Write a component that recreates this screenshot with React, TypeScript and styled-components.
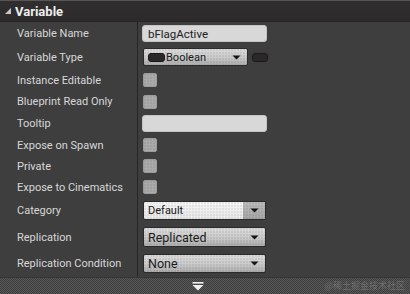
import React from "react";
import styled, { createGlobalStyle } from "styled-components";

const Global = createGlobalStyle`
  html, body { margin: 0; padding: 0; background: #3e3e3e; }
  body { font-family: Roboto, "Noto Sans", sans-serif; }
`;

const Panel = styled.div`
  width: 410px;
  height: 294px;
  display: flex;
  flex-direction: column;
  background: #3e3e3e;
  overflow: hidden;
`;

const Header = styled.div`
  height: 22px;
  box-sizing: border-box;
  border-top: 1px solid #565656;
  background: linear-gradient(#302e2e, #2c2a2a);
  border-bottom: 1px solid #262626;
  display: flex;
  align-items: center;
  padding-left: 5px;
  gap: 4px;
`;

const Title = styled.span`
  font-family: Roboto, sans-serif;
  font-weight: 700;
  font-size: 13px;
  color: #eeeeee;
  line-height: 1;
`;

const Body = styled.div`
  display: flex;
  flex-direction: column;
  flex: 1;
`;

const Row = styled.div<{ $h: number }>`
  display: grid;
  grid-template-columns: 138px 1fr;
  height: ${(p) => p.$h}px;
`;

const Label = styled.div`
  box-sizing: border-box;
  border-right: 1px solid #262626;
  padding-left: 17px;
  display: flex;
  align-items: center;
  font-size: 11px;
  color: #d8d8d8;
  white-space: nowrap;
`;

const Value = styled.div`
  display: flex;
  align-items: center;
  padding-left: 4px;
  gap: 4px;
`;

const TextBox = styled.div`
  box-sizing: border-box;
  width: 125px;
  height: 17px;
  border-radius: 3px;
  background: #d8d8d8;
  border: 1px solid #c4c4c4;
  display: flex;
  align-items: center;
  padding-left: 5px;
  font-size: 11.5px;
  color: #202020;
`;

const dots = `
  radial-gradient(circle at 1px 1px, rgba(0,0,0,0.1) 0.6px, transparent 0.9px)
`;

const Check = styled.div`
  box-sizing: border-box;
  width: 14px;
  height: 14px;
  margin-left: 1px;
  border-radius: 2px;
  background-color: #ababab;
  background-image: ${dots};
  background-size: 3px 3px;
  border: 1px solid #9a9a9a;
`;

const Combo = styled.div<{ $w: number; $h: number; $light?: boolean }>`
  box-sizing: border-box;
  position: relative;
  width: ${(p) => p.$w}px;
  height: ${(p) => p.$h}px;
  margin-left: 1px;
  border: 1px solid #2a2a2a;
  border-radius: 2px;
  display: flex;
  align-items: center;
  background-image: ${dots},
    ${(p) =>
      p.$light
        ? "linear-gradient(#f6f6f6, #e8e8e8)"
        : "linear-gradient(#dcdcdc, #cacaca 55%, #acacac)"};
  background-size: 3px 3px, 100% 100%;
  color: #1b1b1b;
`;

const ComboText = styled.span<{ $size: number }>`
  flex: 1;
  padding-left: 4px;
  font-size: ${(p) => p.$size}px;
  display: flex;
  align-items: center;
  gap: 1px;
`;

const ArrowZone = styled.div<{ $shade?: boolean }>`
  width: 22px;
  align-self: stretch;
  display: flex;
  align-items: center;
  justify-content: center;
  background-image: ${(p) =>
    p.$shade ? `${dots}, linear-gradient(#bcbcbc, #a6a6a6)` : "none"};
  background-size: 3px 3px, 100% 100%;
`;

const Pill = styled.span<{ $w: number }>`
  display: inline-block;
  width: ${(p) => p.$w}px;
  height: 7px;
  border-radius: 3px;
  background: #2a2828;
  border: 1px solid #1a1a1a;
`;

const Footer = styled.div`
  height: 17px;
  box-sizing: border-box;
  border-top: 1px solid #363636;
  background-color: #4a4a4a;
  background-image: repeating-conic-gradient(#585858 0% 25%, #3e3e3e 0% 50%);
  background-size: 2px 2px;
  display: flex;
  align-items: center;
  position: relative;
`;

const FooterArrow = styled.div`
  margin-left: 192px;
  display: flex;
`;

const Watermark = styled.span`
  position: absolute;
  right: 5px;
  top: 3px;
  font-family: "Noto Sans CJK SC", sans-serif;
  font-size: 9px;
  color: rgba(140, 140, 140, 0.55);
  line-height: 1;
`;

const DownArrow = () => (
  <svg width="9" height="5" viewBox="0 0 9 5">
    <path d="M0.5 0.5 L8.5 0.5 L4.5 4.5 Z" fill="#151515" />
  </svg>
);

const rows: { label: string; h: number; kind: string }[] = [
  { label: "Variable Name", h: 23, kind: "name" },
  { label: "Variable Type", h: 24, kind: "type" },
  { label: "Instance Editable", h: 22, kind: "check" },
  { label: "Blueprint Read Only", h: 21, kind: "check" },
  { label: "Tooltip", h: 23, kind: "tooltip" },
  { label: "Expose on Spawn", h: 20, kind: "check" },
  { label: "Private", h: 22, kind: "check" },
  { label: "Expose to Cinematics", h: 20, kind: "check" },
  { label: "Category", h: 27, kind: "category" },
  { label: "Replication", h: 26, kind: "replication" },
  { label: "Replication Condition", h: 27, kind: "condition" },
];

function renderValue(kind: string) {
  switch (kind) {
    case "name":
      return <TextBox>bFlagActive</TextBox>;
    case "tooltip":
      return <TextBox />;
    case "check":
      return <Check />;
    case "type":
      return (
        <>
          <Combo $w={105} $h={18} $light={false}>
            <ComboText $size={11}>
              <Pill $w={15} />
              Boolean
            </ComboText>
            <ArrowZone>
              <DownArrow />
            </ArrowZone>
          </Combo>
          <Pill $w={14} />
        </>
      );
    case "category":
      return (
        <Combo $w={123} $h={19} $light>
          <ComboText $size={11}>Default</ComboText>
          <ArrowZone $shade>
            <DownArrow />
          </ArrowZone>
        </Combo>
      );
    case "replication":
      return (
        <Combo $w={123} $h={20}>
          <ComboText $size={12.5}>Replicated</ComboText>
          <ArrowZone>
            <DownArrow />
          </ArrowZone>
        </Combo>
      );
    case "condition":
      return (
        <Combo $w={123} $h={19}>
          <ComboText $size={12.5}>None</ComboText>
          <ArrowZone>
            <DownArrow />
          </ArrowZone>
        </Combo>
      );
    default:
      return null;
  }
}

export default function App() {
  return (
    <>
      <Global />
      <Panel>
        <Header>
          <svg width="6" height="6" viewBox="0 0 6 6">
            <path d="M6 0 L6 6 L0 6 Z" fill="#c8c8c8" />
          </svg>
          <Title>Variable</Title>
        </Header>
        <Body>
          {rows.map((r) => (
            <Row key={r.label} $h={r.h}>
              <Label>{r.label}</Label>
              <Value>{renderValue(r.kind)}</Value>
            </Row>
          ))}
        </Body>
        <Footer>
          <FooterArrow>
            <svg width="12" height="9" viewBox="0 0 12 9">
              <rect x="0.5" y="0" width="11" height="1.6" fill="#f0f0f0" />
              <path d="M0.5 3 L11.5 3 L6 8.5 Z" fill="#f0f0f0" />
            </svg>
          </FooterArrow>
          <Watermark>@稀土掘金技术社区</Watermark>
        </Footer>
      </Panel>
    </>
  );
}
